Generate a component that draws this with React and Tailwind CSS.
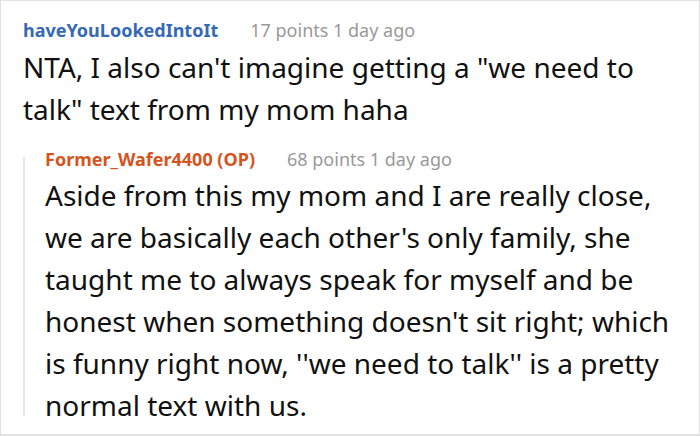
export default function App() {
  return (
    <div className="w-[700px] h-[436px] bg-white border border-[#e2e2e2] border-b-2 overflow-hidden" style={{ fontFamily: '"Noto Sans", sans-serif' }}>
      <div className="pl-[22px] pt-[16px] pr-[20px]">
        <div className="flex items-baseline gap-[32px] text-[18px] leading-[26px]">
          <span className="font-bold text-[#3569b5]">haveYouLookedIntoIt</span>
          <span className="text-[#999999]">17 points 1 day ago</span>
        </div>
        <p className="text-[28px] leading-[42px] text-[#111111] mt-[3px]">
          NTA, I also can't imagine getting a "we need to talk" text from my mom haha
        </p>
        <div className="mt-[16px] flex">
          <div className="w-[2px] bg-[#e6e6e6] mt-[11px] mb-[10px]" />
          <div className="pl-[20px] flex-1">
            <div className="flex items-baseline gap-[32px] text-[18px] leading-[26px]">
              <span className="font-bold text-[#d5541d]">Former_Wafer4400 (OP)</span>
              <span className="text-[#999999]">68 points 1 day ago</span>
            </div>
            <p className="text-[28px] leading-[42px] text-[#111111] mt-[2px]">
              Aside from this my mom and I are really close, we are basically each other's only family, she taught me to always speak for myself and be honest when something doesn't sit right; which is funny right now, ''we need to talk'' is a pretty normal text with us.
            </p>
          </div>
        </div>
      </div>
    </div>
  );
}
